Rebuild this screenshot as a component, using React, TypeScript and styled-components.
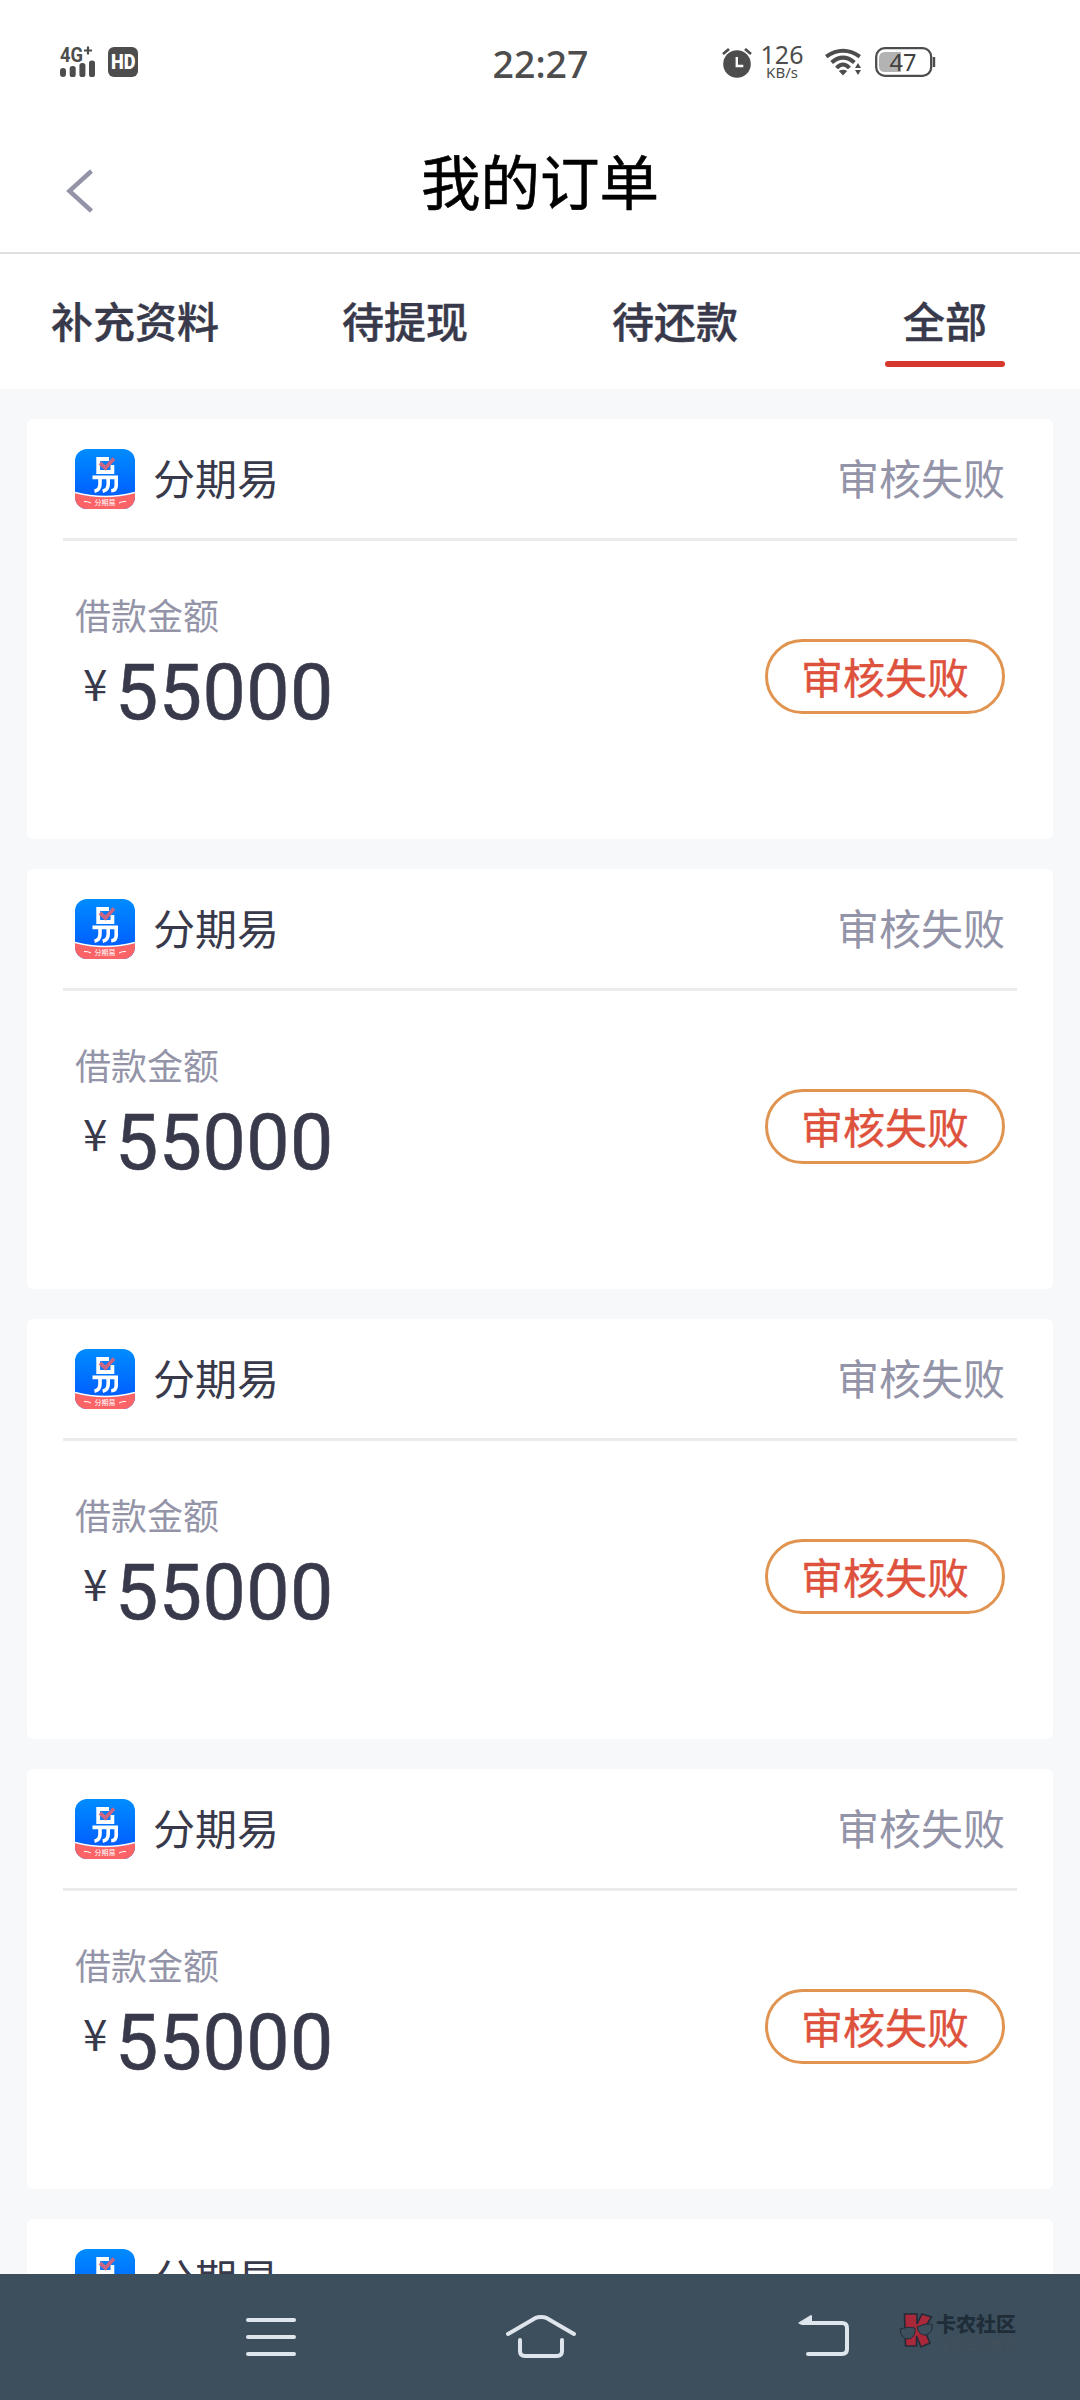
import React from "react";
import styled, { createGlobalStyle } from "styled-components";

const Global = createGlobalStyle`
  * { box-sizing: border-box; }
  body { margin: 0; background: #f7f8fa; }
`;

const cjk = `"Noto Sans CJK SC", sans-serif`;
const latin = `"Noto Sans", "Noto Sans CJK SC", sans-serif`;

const Screen = styled.div`
  display: flex;
  flex-direction: column;
  width: 1080px;
  height: 2400px;
  overflow: hidden;
  background: #f7f8fa;
  font-family: ${cjk};
  color: #383a4b;
`;

const StatusBar = styled.div`
  display: grid;
  grid-template-columns: 1fr auto 1fr;
  align-items: center;
  height: 124px;
  padding: 0 144px 0 60px;
  background: #fff;
  color: #4d4d4d;
  font-family: ${latin};
  flex: none;
`;

const StatusGroup = styled.div<{ $end?: boolean }>`
  display: flex;
  align-items: center;
  justify-content: ${(p) => (p.$end ? "flex-end" : "flex-start")};

  svg {
    overflow: visible;
  }
`;

const Clock = styled.div`
  font-size: 37.5px;
  font-weight: 500;
  line-height: 40px;
  padding: 4px 0 0 85px;
`;

const Speed = styled.div`
  display: flex;
  flex-direction: column;
  align-items: center;
  width: 42px;
  margin: 0 22px 0 9px;
`;

const SpeedValue = styled.span`
  font-size: 25px;
  line-height: 20px;
  font-weight: 400;
`;

const SpeedUnit = styled.span`
  font-size: 15px;
  line-height: 16px;
`;

const Header = styled.header`
  display: grid;
  grid-template-columns: 120px 1fr 120px;
  height: 130px;
  background: #fff;
  border-bottom: 2px solid #e0e0e0;
  flex: none;
`;

const BackButton = styled.button`
  display: flex;
  align-items: flex-start;
  padding: 45px 0 0 65px;
  border: 0;
  background: none;
`;

const Title = styled.h1`
  margin: 0;
  padding-top: 10px;
  text-align: center;
  font-size: 59.5px;
  line-height: 90px;
  font-weight: 400;
  color: #000;
  -webkit-text-stroke: 0.6px #000;
`;

const Tabs = styled.nav`
  display: grid;
  grid-template-columns: repeat(4, 1fr);
  height: 135px;
  background: #fff;
  flex: none;
`;

const Tab = styled.div<{ $active?: boolean }>`
  display: flex;
  flex-direction: column;
  align-items: center;
  padding-top: 35px;
  font-size: 42px;
  line-height: 62px;
  font-weight: 500;
  -webkit-text-stroke: 0.4px #383a4b;

  &::after {
    content: "";
    width: 120px;
    height: 6px;
    margin-top: 10px;
    border-radius: 3px;
    background: ${(p) => (p.$active ? "#d7382e" : "transparent")};
  }
`;

const List = styled.main`
  display: flex;
  flex-direction: column;
  gap: 30px;
  flex: 1;
  min-height: 0;
  overflow: hidden;
  padding: 30px 27px 0;
`;

const Card = styled.section`
  height: 420px;
  padding: 0 36px;
  border-radius: 6px;
  background: #fff;
  flex: none;
`;

const CardHead = styled.div`
  display: flex;
  align-items: center;
  height: 122px;
  padding: 0 12px;
  border-bottom: 3px solid #ebebeb;
`;

const AppName = styled.span`
  flex: 1;
  padding: 0 0 4px 18px;
  font-size: 42px;
  line-height: 60px;
`;

const State = styled.span`
  padding-bottom: 4px;
  font-size: 42px;
  line-height: 60px;
  color: #9494a8;
`;

const CardBody = styled.div`
  display: flex;
  justify-content: space-between;
  padding: 46px 12px 0;
`;

const Label = styled.div`
  font-size: 36px;
  line-height: 54px;
  color: #9494a8;
`;

const Amount = styled.div`
  display: flex;
  align-items: flex-start;
  padding-left: 6px;
  font-family: Roboto, sans-serif;
`;

const Currency = styled.span`
  width: 34px;
  padding: 16px 0 0 2px;
  font-family: ${cjk};
  font-size: 44px;
  line-height: 50px;
`;

const Digits = styled.span`
  font-size: 77px;
  line-height: 90px;
  padding-top: 7px;
  letter-spacing: 0.5px;
  -webkit-text-stroke: 0.6px #383a4b;
`;

const StateButton = styled.button`
  width: 240px;
  height: 75px;
  margin-top: 52px;
  padding: 0 0 2px;
  border: 3px solid #e0944f;
  border-radius: 38px;
  background: #fff;
  color: #dd513d;
  font-family: ${cjk};
  font-size: 42px;
  line-height: 60px;
  -webkit-text-stroke: 0.4px #dd513d;
`;

const NavBar = styled.footer`
  display: flex;
  align-items: flex-start;
  height: 126px;
  padding: 38px 0 0 243px;
  background: #3d4f5d;
  flex: none;
`;

const NavItem = styled.div<{ $gap: number }>`
  display: flex;
  margin-right: ${(p) => p.$gap}px;
`;

const Watermark = styled.div`
  display: flex;
  color: #1f2d39;
`;

const WatermarkText = styled.div`
  display: flex;
  flex-direction: column;
  padding-left: 2px;
  font-size: 20px;
  line-height: 24px;
  font-weight: 900;
`;

const WatermarkSub = styled.span`
  padding-left: 3px;
  font-size: 12px;
  line-height: 15px;
  font-weight: 500;
  letter-spacing: 1px;
  color: #43505b;
`;

const SignalIcon = () => (
  <svg width="36" height="32" viewBox="0 0 36 32" fill="#4d4d4d">
    <text x="0" y="15.5" fontFamily="Roboto" fontSize="20" fontWeight="700" textLength="23" lengthAdjust="spacingAndGlyphs">4G</text>
    <path d="M24 4.5h8M28 .5v8" stroke="#4d4d4d" strokeWidth="2.2" />
    <rect x="0" y="22" width="6" height="9" rx="3" />
    <rect x="9.7" y="20" width="6" height="11" rx="2.6" />
    <rect x="19.4" y="17" width="6" height="14" rx="2.6" />
    <rect x="29" y="14.5" width="6" height="16.5" rx="2.6" />
  </svg>
);

const HdSvg = styled.svg`
  margin-left: 12px;
`;

const HdIcon = () => (
  <HdSvg width="30" height="30" viewBox="0 0 30 30">
    <rect width="30" height="30" rx="6" fill="#4d4d4d" />
    <text x="3" y="22" fontFamily="Roboto" fontSize="19.5" fontWeight="900" fill="#fff" textLength="24.5" lengthAdjust="spacingAndGlyphs">HD</text>
  </HdSvg>
);

const AlarmIcon = () => (
  <svg width="30" height="31" viewBox="0 0 30 31">
    <circle cx="15" cy="17" r="13.8" fill="#4d4d4d" />
    <path d="M1 7l6-5M29 7l-6-5" stroke="#4d4d4d" strokeWidth="2.8" />
    <path d="M14.8 10v9h6.5" fill="none" stroke="#fff" strokeWidth="2.4" />
  </svg>
);

const WifiIcon = () => (
  <svg width="37" height="28" viewBox="0 0 37 28">
    <g fill="none" stroke="#4d4d4d" strokeWidth="4">
      <path d="M1.2 8.6Q18 -3 34.8 8.6" />
      <path d="M6.6 14.6Q18 4.8 29.4 14.6" />
      <path d="M11.6 20Q18 13 24.4 20" />
    </g>
    <path d="M13.8 23q4.2-2.6 8.4 0l-4.2 4.5z" fill="#4d4d4d" />
    <path d="M30 20l3-5 3 5zM30 22l3 5 3-5z" fill="#4d4d4d" />
  </svg>
);

const BatterySvg = styled.svg`
  margin-left: 13px;
`;

const BatteryIcon = () => (
  <BatterySvg width="61" height="30" viewBox="0 0 61 30">
    <rect x="1.2" y="1.2" width="55" height="27.6" rx="8.5" fill="#fff" stroke="#4d4d4d" strokeWidth="2.3" />
    <path d="M26 5H10Q4 5 4 11v8q0 6 6 6H26z" fill="#b3b3b3" />
    <path d="M59 10v10" stroke="#4d4d4d" strokeWidth="2.4" />
    <text x="14.5" y="23.7" fontFamily="Noto Sans" fontSize="23.5" fill="#404040">47</text>
  </BatterySvg>
);

const AppIcon = () => (
  <svg width="60" height="60" viewBox="0 0 60 60">
    <defs>
      <linearGradient id="appBlue" x1="0" y1="0" x2="0" y2="1">
        <stop offset="0" stopColor="#008cff" />
        <stop offset="0.75" stopColor="#0061ff" />
      </linearGradient>
      <clipPath id="appClip"><rect width="60" height="60" rx="12" /></clipPath>
    </defs>
    <g clipPath="url(#appClip)">
      <rect width="60" height="60" fill="url(#appBlue)" />
      <path d="M0 44Q30 52 60 44V60H0z" fill="#fb6467" />
      <path d="M0 43.5Q30 51.5 60 43.5" fill="none" stroke="#fff" strokeWidth="1.5" />
      <path d="M34 10H23.2V23H37.4V16" fill="none" stroke="#fff" strokeWidth="3.8" />
      <path d="M25 14l5.5 5L39 9.5" fill="none" stroke="#c96683" strokeWidth="3.8" />
      <path d="M17.5 28.4H41.2V36.5q0 5-5 5.2M25 29v6q0 6-5.5 7.2M33.2 29v6q0 6-5.5 7.2" fill="none" stroke="#fff" strokeWidth="3.6" />
      <path d="M9 52.5q4-.3 7 1.5M51 52.5q-4-.3-7 1.5" stroke="#fff" strokeWidth="1" fill="none" />
      <text x="19.5" y="56" fontFamily="Noto Sans CJK SC" fontSize="7" fontWeight="400" fill="#fff">分期易</text>
    </g>
  </svg>
);

const BackIcon = () => (
  <svg width="30" height="44" viewBox="0 0 30 44" fill="none" stroke="#9494a8" strokeWidth="4.4">
    <path d="M26.5 2L4.4 22 26.5 42" />
  </svg>
);

const MenuIcon = () => (
  <svg width="56" height="50" viewBox="0 0 56 50" stroke="#dfe5ec" strokeWidth="4" strokeLinecap="round">
    <path d="M5 8h46M5 25h46M5 42h46" />
  </svg>
);

const HomeIcon = () => (
  <svg width="74" height="50" viewBox="0 0 74 50" fill="none" stroke="#dfe5ec" strokeWidth="4" strokeLinecap="round">
    <path d="M4 22L31 6.2Q37 3.8 43 6.2L70 22" />
    <path d="M16 28V39q0 5 5 5H53q5 0 5-5V28" />
  </svg>
);

const ReturnIcon = () => (
  <svg width="56" height="50" viewBox="0 0 56 50" fill="none" stroke="#dfe5ec" strokeWidth="4" strokeLinecap="round">
    <path d="M6 11H46q5 0 5 5V37q0 5-5 5H12" />
    <path d="M3.5 11L15 4v7z" fill="#dfe5ec" stroke="#dfe5ec" strokeWidth="2" strokeLinejoin="round" />
  </svg>
);

const WatermarkLogo = () => (
  <svg width="35" height="38" viewBox="0 0 35 38">
    <path d="M5.5 2H18V12L23 2 32.5 5 25 17 31 31 22 35 17.5 24V34H6.5z" fill="#a92839" stroke="#232b38" strokeWidth="1.6" />
    <g fill="#3d4f5d" stroke="#222c36" strokeWidth="1">
      <path d="M1 17q8-3 15-1 1 10-7 11-7 0-8-10z" />
      <path d="M18 15q8-4 15-3 1 9-6 11-7 1-9-8z" />
    </g>
  </svg>
);

const tabs = ["补充资料", "待提现", "待还款", "全部"];
const orders = Array.from({ length: 5 }, (_, id) => ({
  id,
  name: "分期易",
  state: id < 4 ? "审核失败" : "",
  amount: "55000",
}));

export default function App() {
  return (
    <Screen>
      <Global />
      <StatusBar>
        <StatusGroup>
          <SignalIcon />
          <HdIcon />
        </StatusGroup>
        <Clock>22:27</Clock>
        <StatusGroup $end>
          <AlarmIcon />
          <Speed>
            <SpeedValue>126</SpeedValue>
            <SpeedUnit>KB/s</SpeedUnit>
          </Speed>
          <WifiIcon />
          <BatteryIcon />
        </StatusGroup>
      </StatusBar>
      <Header>
        <BackButton aria-label="返回"><BackIcon /></BackButton>
        <Title>我的订单</Title>
      </Header>
      <Tabs>
        {tabs.map((tab, i) => (
          <Tab key={tab} $active={i === 3}>{tab}</Tab>
        ))}
      </Tabs>
      <List>
        {orders.map((order) => (
          <Card key={order.id}>
            <CardHead>
              <AppIcon />
              <AppName>{order.name}</AppName>
              {order.state && <State>{order.state}</State>}
            </CardHead>
            {order.state && (
              <CardBody>
                <div>
                  <Label>借款金额</Label>
                  <Amount>
                    <Currency>¥</Currency>
                    <Digits>{order.amount}</Digits>
                  </Amount>
                </div>
                <StateButton>{order.state}</StateButton>
              </CardBody>
            )}
          </Card>
        ))}
      </List>
      <NavBar>
        <NavItem $gap={205}><MenuIcon /></NavItem>
        <NavItem $gap={218}><HomeIcon /></NavItem>
        <NavItem $gap={47}><ReturnIcon /></NavItem>
        <Watermark>
          <WatermarkLogo />
          <WatermarkText>
            卡农社区
            <WatermarkSub>金融在线教育</WatermarkSub>
          </WatermarkText>
        </Watermark>
      </NavBar>
    </Screen>
  );
}
